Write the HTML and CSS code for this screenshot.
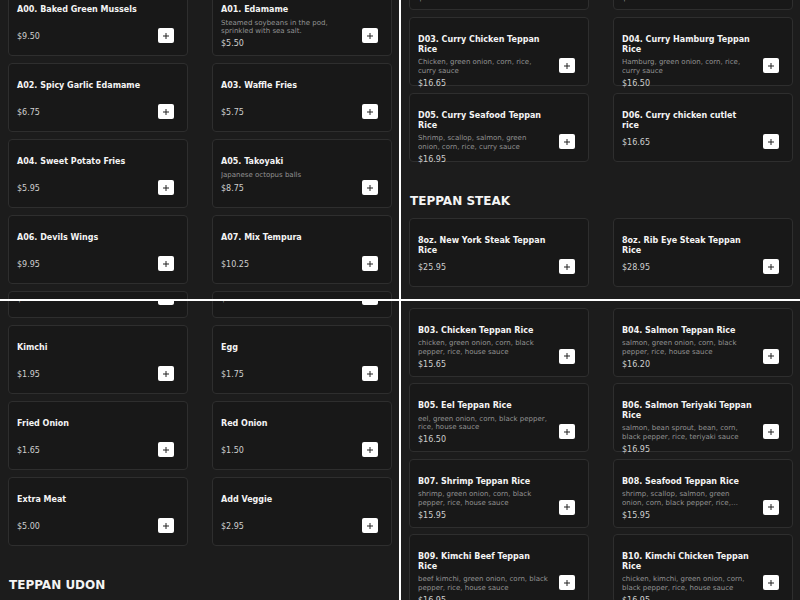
FILE: index.html
```html
<!DOCTYPE html>
<html lang="en">
<head>
<meta charset="utf-8">
<title>Menu</title>
<link rel="stylesheet" href="styles.css">
</head>
<body>
<div class="screens">

  <section class="screen">
    <div class="grid grid-tl">
      <div class="card"><div class="info"><div class="title">A00. Baked Green Mussels</div><div class="price">$9.50</div></div><button class="add"><svg viewBox="0 0 6 6" width="6" height="6"><path d="M3 0V6M0 3H6"/></svg></button></div>
      <div class="card"><div class="info"><div class="title">A01. Edamame</div><div class="desc">Steamed soybeans in the pod, sprinkled with sea salt.</div><div class="price">$5.50</div></div><button class="add"><svg viewBox="0 0 6 6" width="6" height="6"><path d="M3 0V6M0 3H6"/></svg></button></div>
      <div class="card"><div class="info"><div class="title">A02. Spicy Garlic Edamame</div><div class="price">$6.75</div></div><button class="add"><svg viewBox="0 0 6 6" width="6" height="6"><path d="M3 0V6M0 3H6"/></svg></button></div>
      <div class="card"><div class="info"><div class="title">A03. Waffle Fries</div><div class="price">$5.75</div></div><button class="add"><svg viewBox="0 0 6 6" width="6" height="6"><path d="M3 0V6M0 3H6"/></svg></button></div>
      <div class="card"><div class="info"><div class="title">A04. Sweet Potato Fries</div><div class="price">$5.95</div></div><button class="add"><svg viewBox="0 0 6 6" width="6" height="6"><path d="M3 0V6M0 3H6"/></svg></button></div>
      <div class="card"><div class="info"><div class="title">A05. Takoyaki</div><div class="desc">Japanese octopus balls</div><div class="price">$8.75</div></div><button class="add"><svg viewBox="0 0 6 6" width="6" height="6"><path d="M3 0V6M0 3H6"/></svg></button></div>
      <div class="card"><div class="info"><div class="title">A06. Devils Wings</div><div class="price">$9.95</div></div><button class="add"><svg viewBox="0 0 6 6" width="6" height="6"><path d="M3 0V6M0 3H6"/></svg></button></div>
      <div class="card"><div class="info"><div class="title">A07. Mix Tempura</div><div class="price">$10.25</div></div><button class="add"><svg viewBox="0 0 6 6" width="6" height="6"><path d="M3 0V6M0 3H6"/></svg></button></div>
      <div class="card"><div class="info"><div class="title">A08. Gyoza</div><div class="price">$6.95</div></div><button class="add"><svg viewBox="0 0 6 6" width="6" height="6"><path d="M3 0V6M0 3H6"/></svg></button></div>
      <div class="card"><div class="info"><div class="title">A09. Calamari</div><div class="price">$8.95</div></div><button class="add"><svg viewBox="0 0 6 6" width="6" height="6"><path d="M3 0V6M0 3H6"/></svg></button></div>
    </div>
  </section>

  <section class="screen">
    <div class="grid grid-tr">
      <div class="card"><div class="info"><div class="title">D01. Curry Beef Rice</div><div class="desc">Beef, green onion, corn, rice, curry sauce</div><div class="price">$15.75</div></div><button class="add"><svg viewBox="0 0 6 6" width="6" height="6"><path d="M3 0V6M0 3H6"/></svg></button></div>
      <div class="card"><div class="info"><div class="title">D02. Curry Pork Rice</div><div class="desc">Pork, green onion, corn, rice, curry sauce</div><div class="price">$16.25</div></div><button class="add"><svg viewBox="0 0 6 6" width="6" height="6"><path d="M3 0V6M0 3H6"/></svg></button></div>
      <div class="card"><div class="info"><div class="title">D03. Curry Chicken Teppan Rice</div><div class="desc">Chicken, green onion, corn, rice, curry sauce</div><div class="price">$16.65</div></div><button class="add"><svg viewBox="0 0 6 6" width="6" height="6"><path d="M3 0V6M0 3H6"/></svg></button></div>
      <div class="card"><div class="info"><div class="title">D04. Curry Hamburg Teppan Rice</div><div class="desc">Hamburg, green onion, corn, rice, curry sauce</div><div class="price">$16.50</div></div><button class="add"><svg viewBox="0 0 6 6" width="6" height="6"><path d="M3 0V6M0 3H6"/></svg></button></div>
      <div class="card"><div class="info"><div class="title">D05. Curry Seafood Teppan Rice</div><div class="desc">Shrimp, scallop, salmon, green onion, corn, rice, curry sauce</div><div class="price">$16.95</div></div><button class="add"><svg viewBox="0 0 6 6" width="6" height="6"><path d="M3 0V6M0 3H6"/></svg></button></div>
      <div class="card"><div class="info"><div class="title">D06. Curry chicken cutlet rice</div><div class="price">$16.65</div></div><button class="add"><svg viewBox="0 0 6 6" width="6" height="6"><path d="M3 0V6M0 3H6"/></svg></button></div>
    </div>
    <h2 class="section-title">TEPPAN STEAK</h2>
    <div class="grid">
      <div class="card"><div class="info"><div class="title">8oz. New York Steak Teppan Rice</div><div class="price">$25.95</div></div><button class="add"><svg viewBox="0 0 6 6" width="6" height="6"><path d="M3 0V6M0 3H6"/></svg></button></div>
      <div class="card"><div class="info"><div class="title">8oz. Rib Eye Steak Teppan Rice</div><div class="price">$28.95</div></div><button class="add"><svg viewBox="0 0 6 6" width="6" height="6"><path d="M3 0V6M0 3H6"/></svg></button></div>
    </div>
  </section>

  <section class="screen">
    <div class="grid grid-bl">
      <div class="card"><div class="info"><div class="title">Rice</div><div class="price">$2.00</div></div><button class="add"><svg viewBox="0 0 6 6" width="6" height="6"><path d="M3 0V6M0 3H6"/></svg></button></div>
      <div class="card"><div class="info"><div class="title">Noodle</div><div class="price">$2.50</div></div><button class="add"><svg viewBox="0 0 6 6" width="6" height="6"><path d="M3 0V6M0 3H6"/></svg></button></div>
      <div class="card"><div class="info"><div class="title">Kimchi</div><div class="price">$1.95</div></div><button class="add"><svg viewBox="0 0 6 6" width="6" height="6"><path d="M3 0V6M0 3H6"/></svg></button></div>
      <div class="card"><div class="info"><div class="title">Egg</div><div class="price">$1.75</div></div><button class="add"><svg viewBox="0 0 6 6" width="6" height="6"><path d="M3 0V6M0 3H6"/></svg></button></div>
      <div class="card"><div class="info"><div class="title">Fried Onion</div><div class="price">$1.65</div></div><button class="add"><svg viewBox="0 0 6 6" width="6" height="6"><path d="M3 0V6M0 3H6"/></svg></button></div>
      <div class="card"><div class="info"><div class="title">Red Onion</div><div class="price">$1.50</div></div><button class="add"><svg viewBox="0 0 6 6" width="6" height="6"><path d="M3 0V6M0 3H6"/></svg></button></div>
      <div class="card"><div class="info"><div class="title">Extra Meat</div><div class="price">$5.00</div></div><button class="add"><svg viewBox="0 0 6 6" width="6" height="6"><path d="M3 0V6M0 3H6"/></svg></button></div>
      <div class="card"><div class="info"><div class="title">Add Veggie</div><div class="price">$2.95</div></div><button class="add"><svg viewBox="0 0 6 6" width="6" height="6"><path d="M3 0V6M0 3H6"/></svg></button></div>
    </div>
    <h2 class="section-title">TEPPAN UDON</h2>
  </section>

  <section class="screen">
    <div class="grid grid-br">
      <div class="card"><div class="info"><div class="title">B01. Beef Teppan Rice</div><div class="desc">beef, green onion, corn, black pepper, rice, house sauce</div><div class="price">$15.95</div></div><button class="add"><svg viewBox="0 0 6 6" width="6" height="6"><path d="M3 0V6M0 3H6"/></svg></button></div>
      <div class="card"><div class="info"><div class="title">B02. Pork Teppan Rice</div><div class="desc">pork, green onion, corn, black pepper, rice, house sauce</div><div class="price">$15.65</div></div><button class="add"><svg viewBox="0 0 6 6" width="6" height="6"><path d="M3 0V6M0 3H6"/></svg></button></div>
      <div class="card"><div class="info"><div class="title">B03. Chicken Teppan Rice</div><div class="desc">chicken, green onion, corn, black pepper, rice, house sauce</div><div class="price">$15.65</div></div><button class="add"><svg viewBox="0 0 6 6" width="6" height="6"><path d="M3 0V6M0 3H6"/></svg></button></div>
      <div class="card"><div class="info"><div class="title">B04. Salmon Teppan Rice</div><div class="desc">salmon, green onion, corn, black pepper, rice, house sauce</div><div class="price">$16.20</div></div><button class="add"><svg viewBox="0 0 6 6" width="6" height="6"><path d="M3 0V6M0 3H6"/></svg></button></div>
      <div class="card"><div class="info"><div class="title">B05. Eel Teppan Rice</div><div class="desc">eel, green onion, corn, black pepper, rice, house sauce</div><div class="price">$16.50</div></div><button class="add"><svg viewBox="0 0 6 6" width="6" height="6"><path d="M3 0V6M0 3H6"/></svg></button></div>
      <div class="card"><div class="info"><div class="title">B06. Salmon Teriyaki Teppan Rice</div><div class="desc">salmon, bean sprout, bean, corn, black pepper, rice, teriyaki sauce</div><div class="price">$16.95</div></div><button class="add"><svg viewBox="0 0 6 6" width="6" height="6"><path d="M3 0V6M0 3H6"/></svg></button></div>
      <div class="card"><div class="info"><div class="title">B07. Shrimp Teppan Rice</div><div class="desc">shrimp, green onion, corn, black pepper, rice, house sauce</div><div class="price">$15.95</div></div><button class="add"><svg viewBox="0 0 6 6" width="6" height="6"><path d="M3 0V6M0 3H6"/></svg></button></div>
      <div class="card"><div class="info"><div class="title">B08. Seafood Teppan Rice</div><div class="desc">shrimp, scallop, salmon, green onion, corn, black pepper, rice, house sauce</div><div class="price">$15.95</div></div><button class="add"><svg viewBox="0 0 6 6" width="6" height="6"><path d="M3 0V6M0 3H6"/></svg></button></div>
      <div class="card"><div class="info"><div class="title">B09. Kimchi Beef Teppan Rice</div><div class="desc">beef kimchi, green onion, corn, black pepper, rice, house sauce</div><div class="price">$16.95</div></div><button class="add"><svg viewBox="0 0 6 6" width="6" height="6"><path d="M3 0V6M0 3H6"/></svg></button></div>
      <div class="card"><div class="info"><div class="title">B10. Kimchi Chicken Teppan Rice</div><div class="desc">chicken, kimchi, green onion, corn, black pepper, rice, house sauce</div><div class="price">$16.95</div></div><button class="add"><svg viewBox="0 0 6 6" width="6" height="6"><path d="M3 0V6M0 3H6"/></svg></button></div>
    </div>
  </section>

</div>
</body>
</html>
```

FILE: styles.css
```css
* { box-sizing: border-box; }

html, body {
  margin: 0;
  padding: 0;
  background: #ffffff;
}

body {
  font-family: "DejaVu Sans", "Liberation Sans", sans-serif;
  width: 800px;
  height: 600px;
  overflow: hidden;
}

.screens {
  display: grid;
  grid-template-columns: 399px 399px;
  grid-template-rows: 299px 299px;
  gap: 2px;
  width: 800px;
  height: 600px;
}

.screen {
  background: #1c1c1c;
  overflow: hidden;
  padding: 0 7px 0 8px;
}

.grid {
  display: grid;
  grid-template-columns: 180px 180px;
  column-gap: 24px;
  row-gap: 7px;
}

.grid-tl { margin-top: -13px; }
.grid-tr { margin-top: -59px; }
.grid-bl { margin-top: -52px; }
.grid-br { margin-top: -69px; row-gap: 6.5px; }

.card {
  display: flex;
  gap: 8px;
  height: 69px;
  padding: 17px 13px 13px 8px;
  background: #181818;
  border: 1px solid #2e2e2e;
  border-radius: 4px;
}

.info {
  flex: 1;
  min-width: 0;
  display: flex;
  flex-direction: column;
  justify-content: space-between;
}

.info > * { flex-shrink: 0; }

.title {
  font-size: 8px;
  line-height: 9.6px;
  font-weight: bold;
  color: #f4f4f4;
}

.desc {
  margin-top: 4px;
  padding-right: 2px;
  font-size: 7px;
  line-height: 8.75px;
  color: #939393;
  display: -webkit-box;
  -webkit-line-clamp: 2;
  -webkit-box-orient: vertical;
  overflow: hidden;
}

.price {
  margin-top: 3px;
  font-size: 8px;
  line-height: 10px;
  color: #cfcfcf;
}

.add {
  flex: none;
  align-self: flex-end;
  width: 16px;
  height: 15px;
  margin: 0 0 -1px 0;
  padding: 0;
  border: none;
  border-radius: 2px;
  background: #ffffff;
  display: flex;
  align-items: center;
  justify-content: center;
}

.add svg {
  display: block;
}

.add path {
  stroke: #222222;
  stroke-width: 1;
  fill: none;
}

.section-title {
  margin: 32px 0 10px 1px;
  font-size: 12px;
  line-height: 14px;
  font-weight: bold;
  color: #f4f4f4;
}
```
